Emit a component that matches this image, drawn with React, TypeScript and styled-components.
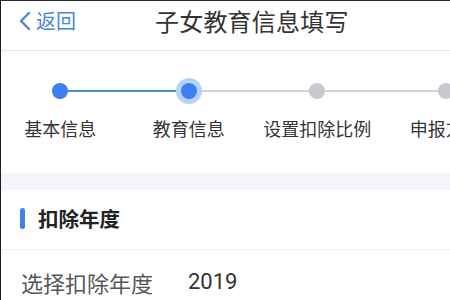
import React from "react";
import styled, { createGlobalStyle } from "styled-components";

const Global = createGlobalStyle`
  html, body { margin: 0; padding: 0; background: #fff; }
  body { font-family: "Noto Sans CJK SC", "Noto Sans", sans-serif; overflow: hidden; }
`;

const Page = styled.div`
  width: 450px;
  height: 300px;
  box-sizing: border-box;
  border-left: 1px solid #1e1e1e;
  border-top: 1px solid #2a2a2a;
  overflow: hidden;
  background: #fff;
`;

const Header = styled.header`
  height: 50px;
  box-sizing: border-box;
  border-bottom: 1px solid #e6e6e8;
  display: flex;
  align-items: center;
  padding-bottom: 9px;
`;

const Back = styled.div`
  display: flex;
  align-items: center;
  padding-left: 17px;
  color: #4a86d8;
  font-size: 20px;
  line-height: 1;
  gap: 4px;
`;

const Title = styled.h1`
  margin: 0 0 0 79px;
  font-size: 24px;
  font-weight: 400;
  color: #333;
  letter-spacing: 0.2px;
  line-height: 1;
`;

const StepperBox = styled.section`
  height: 122px;
  display: flex;
  padding-top: 27px;
  box-sizing: border-box;
`;

const Steps = styled.div`
  display: flex;
  margin-left: -5px;
`;

const Step = styled.div<{ $left?: string; $right?: string }>`
  position: relative;
  width: 128.5px;
  flex: none;
  display: flex;
  flex-direction: column;
  align-items: center;
  &::before, &::after {
    content: "";
    position: absolute;
    top: 12px;
    height: 2px;
    width: 50%;
  }
  &::before { left: 0; background: ${(p) => p.$left || "transparent"}; }
  &::after { right: 0; background: ${(p) => p.$right || "transparent"}; }
`;

const DotWrap = styled.div`
  position: relative;
  z-index: 1;
  width: 26px;
  height: 26px;
  display: flex;
  align-items: center;
  justify-content: center;
`;

const Dot = styled.div<{ $state: "done" | "active" | "todo" }>`
  width: 16px;
  height: 16px;
  border-radius: 50%;
  background: ${(p) => (p.$state === "todo" ? "#c7c8d0" : "#3b80ee")};
  box-shadow: ${(p) => (p.$state === "active" ? "0 0 0 5px #b4d3f6" : "none")};
`;

const StepLabel = styled.div`
  margin-top: 15px;
  font-size: 18px;
  color: #353535;
  white-space: nowrap;
  line-height: 1;
`;

const Band = styled.div`
  height: 17px;
  background: #f4f5f8;
`;

const SectionHead = styled.div`
  height: 60px;
  box-sizing: border-box;
  border-bottom: 1px solid #eeeef0;
  display: flex;
  align-items: center;
  padding-left: 19px;
  padding-bottom: 2px;
  gap: 13px;
`;

const Bar = styled.span`
  width: 5px;
  height: 21px;
  border-radius: 3px;
  background: #3f82ee;
`;

const SectionTitle = styled.span`
  font-size: 20.5px;
  font-weight: 700;
  color: #222;
  line-height: 1;
`;

const Row = styled.div`
  display: flex;
  align-items: center;
  padding: 21px 0 0 20px;
`;

const RowLabel = styled.span`
  font-size: 22px;
  color: #575757;
  width: 167px;
  line-height: 1;
`;

const RowValue = styled.span`
  font-size: 22px;
  color: #333;
  line-height: 1;
  font-family: "Roboto", "Noto Sans", sans-serif;
`;

const BLUE_LINE = "#4f8cc6";
const GRAY_LINE = "#d2d3d8";

const steps: { label: string; state: "done" | "active" | "todo"; left?: string; right?: string }[] = [
  { label: "基本信息", state: "done", right: BLUE_LINE },
  { label: "教育信息", state: "active", left: BLUE_LINE, right: GRAY_LINE },
  { label: "设置扣除比例", state: "todo", left: GRAY_LINE, right: GRAY_LINE },
  { label: "申报方式", state: "todo", left: GRAY_LINE, right: GRAY_LINE },
];

export default function App() {
  return (
    <>
      <Global />
      <Page>
        <Header>
          <Back>
            <svg width="14" height="20" viewBox="0 0 14 20" fill="none">
              <path d="M11 2 L3 10 L11 18" stroke="#4a86d8" strokeWidth="2.4" strokeLinecap="round" strokeLinejoin="round" />
            </svg>
            <span>返回</span>
          </Back>
          <Title>子女教育信息填写</Title>
        </Header>
        <StepperBox>
          <Steps>
            {steps.map((s) => (
              <Step key={s.label} $left={s.left} $right={s.right}>
                <DotWrap>
                  <Dot $state={s.state} />
                </DotWrap>
                <StepLabel>{s.label}</StepLabel>
              </Step>
            ))}
          </Steps>
        </StepperBox>
        <Band />
        <SectionHead>
          <Bar />
          <SectionTitle>扣除年度</SectionTitle>
        </SectionHead>
        <Row>
          <RowLabel>选择扣除年度</RowLabel>
          <RowValue>2019</RowValue>
        </Row>
      </Page>
    </>
  );
}
